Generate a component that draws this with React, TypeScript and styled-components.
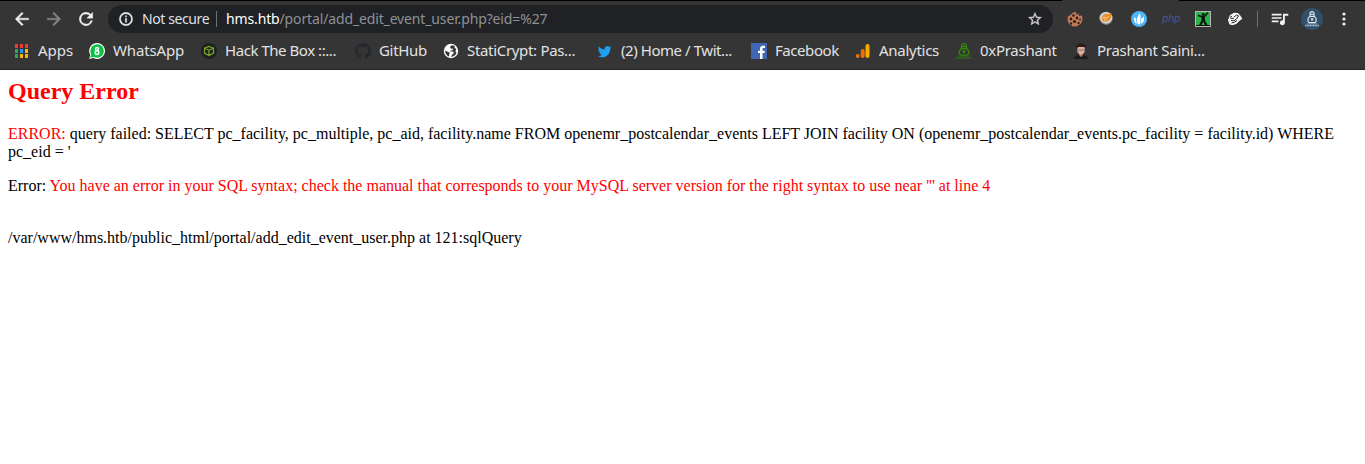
import React from 'react';
import styled, { createGlobalStyle } from 'styled-components';

const Global = createGlobalStyle`
  html, body { margin: 0; background: #fff; }
  * { box-sizing: border-box; }
`;

const ui = "'Noto Sans', sans-serif";

const Browser = styled.div`
  display: flex;
  flex-direction: column;
  height: 464px;
  overflow: hidden;
`;
const Chrome = styled.header`
  height: 70px;
  flex: none;
  background: #353535;
  border-bottom: 1px solid #242424;
  font-family: ${ui};
`;
const TabEdge = styled.div`
  height: 1px;
  display: flex;
  justify-content: space-between;
`;
const EdgeLine = styled.i<{ $w: number }>`
  width: ${p => p.$w}px;
  background: #000;
`;
const Toolbar = styled.div`
  height: 36px;
  display: flex;
  align-items: center;
  padding-left: 12px;
`;
const Slot = styled.span<{ $w: number }>`
  width: ${p => p.$w}px;
  flex: none;
  display: flex;
  align-items: center;
  justify-content: center;
  svg { display: block; flex: none; }
`;
const Address = styled.div`
  width: 945px;
  height: 28px;
  flex: none;
  border-radius: 14px;
  background: #202124;
  display: flex;
  align-items: center;
  padding: 0 8px 0 10px;
  font-size: 14px;
  line-height: 28px;
  white-space: pre;
`;
const Security = styled.span`
  width: 67px;
  margin-left: 8px;
  color: #dfe1e5;
  letter-spacing: -0.4px;
`;
const Split = styled.i<{ $m: number; $r: number }>`
  width: 1px;
  height: 16px;
  margin: 0 ${p => p.$r}px 0 ${p => p.$m}px;
  background: #6f7073;
`;
const Url = styled.span`
  flex: 1;
  color: #8e9296;
  letter-spacing: -0.14px;
  b { font-weight: 400; color: #fff; }
`;
const Php = styled.span`
  font: italic 10px 'DejaVu Sans', sans-serif;
  color: #4a559a;
  line-height: 16px;
  letter-spacing: -0.3px;
`;
const Bookmarks = styled.nav`
  height: 28px;
  display: flex;
  padding-left: 14px;
`;
const Bookmark = styled.a<{ $w: number }>`
  width: ${p => p.$w}px;
  flex: none;
  display: flex;
  align-items: center;
  gap: 8px;
  font-size: 15px;
  color: #e2e2e2;
  white-space: nowrap;
  svg { display: block; flex: none; }
`;
const Label = styled.span<{ $ls: number }>`
  line-height: 26px;
  padding-bottom: 2px;
  letter-spacing: ${p => p.$ls}px;
`;
const Page = styled.main`
  padding: 8px;
  font: 16px 'Liberation Serif', serif;
  line-height: 18px;
  color: #000;
`;
const Title = styled.h2`
  margin: 0 0 20px;
  font-size: 24px;
  line-height: 27px;
  color: #f00;
`;
const Para = styled.p<{ $gap?: number }>`
  margin: 0 0 ${p => p.$gap ?? 16}px;
`;
const Red = styled.span`
  color: #f00;
`;

const Icon = ({ s = 16, v = '0 0 16 16', children }: { s?: number; v?: string; children: React.ReactNode }) => (
  <svg width={s} height={s} viewBox={v} fill="none">{children}</svg>
);
const M = '0 0 24 24';

const Locker = ({ c }: { c: string }) => (
  <>
    <path d="M5.500 5V3a2.500 2.300 0 0 1 5 0V5M5.700 3.400h4.600" stroke={c} strokeWidth="1.200" />
    <path d="M5.300 5.500h5.400l2 2.500v3l-1.400 1.200H4.700L3.300 11V8z" stroke={c} strokeWidth="1.300" />
    <path d="M8 7.300v3.200M6.500 8.500h3" stroke={c} strokeWidth="1.300" />
    <path d="M2 13.400h12" stroke={c} strokeWidth=".8" opacity=".6" />
    <path d="M0 15h16" stroke={c} strokeWidth="1.600" strokeDasharray="1.400 .4" opacity=".7" />
  </>
);

const appDots = ['#f23b30', '#f23b30', '#f23b30', '#34a162', '#2196f3', '#f9b50b', '#34a162', '#f9b50b', '#f9b50b'];

const bookmarks: { w: number; ls: number; label: string; icon: React.ReactNode }[] = [
  { w: 75, ls: 0, label: 'Apps', icon: <Icon>{appDots.map((c, i) => <rect key={i} x={1 + (i % 3) * 5} y={1 + Math.floor(i / 3) * 5} width="3" height="4" fill={c} />)}</Icon> },
  { w: 112, ls: -0.14, label: 'WhatsApp', icon: <Icon><path d="M8 0a8 8 0 1 1-3.700 15.100L.2 16l1-4A8 8 0 0 1 8 0z" fill="#fff" /><circle cx="8.100" cy="8" r="6.800" fill="#0cc143" /><path d="M2 11l-.6 3.700L5.600 14z" fill="#0cc143" /><circle cx="8" cy="6.100" r="1.500" stroke="#fff" strokeWidth="1.500" /><circle cx="8" cy="9.600" r="1.800" stroke="#fff" strokeWidth="1.500" /></Icon> },
  { w: 154, ls: -0.45, label: 'Hack The Box ::...', icon: <Icon><circle cx="8" cy="8" r="8" fill="#1d2126" /><path d="M8 3.500l4.500 1.700v4.900L8 12.500l-4.500-2.400V5.200zM3.500 5.200L8 7.200l4.500-2M8 7.200v5.300" stroke="#7ba71b" strokeWidth="1.200" /></Icon> },
  { w: 88, ls: -0.33, label: 'GitHub', icon: <Icon><path fill="#24292e" d="M8 0a8 8 0 0 0-2.530 15.590c.4.070.55-.17.55-.38v-1.340c-2.230.49-2.700-1.070-2.700-1.070-.36-.93-.89-1.170-.89-1.170-.73-.5.050-.49.050-.49.8.060 1.230.83 1.230.83.72 1.220 1.870.87 2.330.66.070-.52.28-.87.5-1.070-1.770-.2-3.640-.89-3.640-3.950 0-.87.310-1.590.82-2.150-.08-.2-.36-1.020.08-2.120 0 0 .67-.21 2.200.82a7.600 7.600 0 0 1 4 0c1.530-1.040 2.200-.82 2.200-.82.44 1.100.16 1.920.08 2.120.51.56.82 1.270.82 2.150 0 3.070-1.870 3.750-3.650 3.950.29.25.54.73.54 1.480v2.200c0 .21.150.46.55.38A8 8 0 0 0 8 0z" /></Icon> },
  { w: 154, ls: -0.32, label: 'StatiCrypt: Pas...', icon: <Icon><circle cx="8" cy="8" r="7.200" fill="#fff" /><path fill="#353535" d="M9 2.300C7.600 3 7 3.500 7.300 4.700c.5.800 1.500.3 2.200.8.700.600.6 1.400-.2 1.700-1 .3-2.300.2-2.300 1.300h2.500c1.300 0 1.500 1.200 1 2-.5.600-1.300.6-1.500 1.300-.1.800-.5 1.500-1.300 2.200 3-.1 5.200-2 5.900-4.400-.8-.2-1.200-1-1-1.800.3-.9 1-1.200.4-2-.5-.5-1.400-.2-1.400-1 0-.7.4-1.100 0-1.700A6 6 0 0 0 9 2.300zM2.200 7.500c1.300.5 2.500 1.600 4 1.700.8.300.4 1.200.1 1.800-.2.600.2 1.600-.4 2.400A6 6 0 0 1 2.200 7.500z" /></Icon> },
  { w: 154, ls: -0.44, label: '(2) Home / Twit...', icon: <Icon s={16} v="0 0 24 24"><path fill="#1da1f2" d="M22.200 5.700c-.8.3-1.500.5-2.400.6.9-.5 1.500-1.300 1.800-2.200-.8.5-1.700.8-2.600 1A4.100 4.100 0 0 0 12 8.800C8.600 8.600 5.600 7 3.600 4.500a4.100 4.100 0 0 0 1.300 5.500c-.7 0-1.300-.2-1.900-.5 0 2 1.400 3.700 3.300 4.100-.6.2-1.200.2-1.900.1.500 1.600 2 2.800 3.800 2.800A8.200 8.200 0 0 1 2.200 18.200 11.600 11.600 0 0 0 20.100 7.800c.8-.6 1.500-1.300 2.100-2.100z" transform="translate(-1 .7) scale(1.030)" /></Icon> },
  { w: 104, ls: -0.44, label: 'Facebook', icon: <Icon><path fill="#4267b2" d="M0 0h16v16H0z" /><path fill="#fff" d="M9 16v-6H7V7.700h2V6c0-2 1.200-3.200 3-3.200h1.900v2.100h-1.200c-1 0-1.200.5-1.200 1.200v1.600h2.300L13.500 10h-2v6z" /></Icon> },
  { w: 101, ls: -0.27, label: 'Analytics', icon: <Icon><rect x="10.500" y="1" width="4" height="14" rx="2" fill="#f9ab00" /><rect x="5.700" y="6" width="4" height="9" rx="2" fill="#e8710a" /><circle cx="2.700" cy="13" r="2" fill="#e8710a" /></Icon> },
  { w: 117, ls: -0.28, label: '0xPrashant', icon: <Icon><Locker c="#308a0b" /></Icon> },
  { w: 150, ls: -0.28, label: 'Prashant Saini...', icon: <Icon><path fill="#191b1f" d="M1 16l.5-2 4-2.500h5l4 2.500.5 2z" /><path fill="#e2b09b" d="M4 4h8l-.4 5L9 12H7L4.400 9z" /><path fill="#291d1a" d="M3.800 6.500L3 3.500 4.800 1 9 .2l3 1 1 2.300-.8 3-.7-2.500H5z" /><path stroke="#77757d" d="M4.500 6.400h3v1.500H5zM8.700 6.400h3L11.300 7.900H8.700z" strokeWidth=".6" /><path d="M6.300 11l1.700.8 1.700-.8v1.800L8 14l-1.700-1.200z" fill="#b77b65" /></Icon> },
];

export default function App() {
  return (
    <Browser>
      <Global />
      <Chrome>
        <TabEdge><EdgeLine $w={1062} /><EdgeLine $w={186} /></TabEdge>
        <Toolbar>
          <Slot $w={20}><Icon s={20} v={M}><path fill="#f1f1f1" stroke="#f1f1f1" strokeWidth=".5" d="M20 11H7.830l5.590-5.590L12 4l-8 8 8 8 1.410-1.410L7.830 13H20z" /></Icon></Slot>
          <Slot $w={44}><Icon s={20} v={M}><path fill="#858585" stroke="#858585" strokeWidth=".5" d="M12 4l-1.410 1.410L16.170 11H4v2h12.170l-5.580 5.590L12 20l8-8z" /></Icon></Slot>
          <Slot $w={20}><Icon s={20} v={M}><path fill="#f1f1f1" stroke="#f1f1f1" strokeWidth=".5" d="M17.650 6.350A8 8 0 1 0 19.730 14h-2.080A6 6 0 1 1 12 6c1.660 0 3.140.69 4.220 1.780L13 11h7V4z" /></Icon></Slot>
          <Slot $w={12} />
          <Address>
            <Slot $w={16}><Icon s={16} v={M}><path fill="#e8eaed" d="M11 7h2v2h-2zm0 4h2v6h-2zm1-9a10 10 0 1 0 0 20 10 10 0 0 0 0-20zm0 18a8 8 0 1 1 0-16 8 8 0 0 1 0 16z" stroke="#e8eaed" strokeWidth=".6" /></Icon></Slot>
            <Security>Not secure</Security>
            <Split $m={7} $r={9} />
            <Url><b>hms.htb</b>/portal/add_edit_event_user.php?eid=%27</Url>
            <Slot $w={20}><Icon s={16} v={M}><path fill="#d0d1d3" d="M22 9.240l-7.190-.62L12 2 9.190 8.630 2 9.240l5.460 4.730L5.820 21 12 17.270 18.180 21l-1.630-7.030zM12 15.400l-3.760 2.270 1-4.280-3.320-2.880 4.380-.38L12 6.100l1.710 4.040 4.380.38-3.320 2.880 1 4.280z" stroke="#d0d1d3" strokeWidth=".5" /></Icon></Slot>
          </Address>
          <Slot $w={44}><Icon><path fill="#c47a54" d="M6 1.500L9 1l.5 3 2-1.500.5 2.500 3-.5.5 4-1.500 4-4 2.800-4 .2-4-2.500L.5 9 1 5.500 3.500 4z" /><g fill="#2b211f"><circle cx="6.500" cy="4.500" r="1.300" /><circle cx="10" cy="7" r="1.400" /><circle cx="4" cy="8" r="1.400" /><circle cx="7.500" cy="10.500" r="1.600" /><circle cx="13" cy="8.500" r="1" /><circle cx="11.500" cy="12" r="1.200" /><circle cx="4" cy="12.500" r="1.200" /></g></Icon></Slot>
          <Slot $w={18}><Icon><ellipse cx="8" cy="7" rx="6.500" ry="6.200" fill="#d2cdc6" /><path fill="#777" d="M2 8c2 6 10 7 13-1-1 9-12 9-13 1z" /><path fill="#ed891f" d="M4 7l1-3 3-1 2 .5 3-1.500.5 3-2 4-3.500 1.500L4.500 10z" /><path d="M5 7l2.500-1 1 1.500L11 5M6 9l2-1" stroke="#ffe2a0" strokeWidth=".9" /></Icon></Slot>
          <Slot $w={48}><Icon><circle cx="8" cy="8" r="8" fill="#4eb5f7" /><path fill="#fff" d="M8.200 2.500L9.500 4v8L8 14l-1.800-2L6 7.500zM3.300 6l1.700 1.500.7 5.300L4 11.500 3 8.500zM12.800 5.500l.2 4-1.200 2.200-1.800 1V8z" /></Icon></Slot>
          <Slot $w={16}><Php>php</Php></Slot>
          <Slot $w={48}><Icon><rect x=".5" y=".5" width="15" height="15" fill="#29b34a" stroke="#b7b7b7" /><path d="M9.500 5.500L13 1.500M8.500 6L3 4.500" stroke="#07130b" strokeWidth="1.500" /><path fill="#07130b" d="M6.500 5h3.300l.2 4.500 2.500 4.500H15v1H1v-1h3l2.500-4.500z" /><path fill="#29b34a" d="M8.300 10.500L10 14H6.500z" /><circle cx="8.200" cy="3.500" r="1.400" fill="#07130b" /></Icon></Slot>
          <Slot $w={16}><Icon><path fill="#f5f5f5" d="M3 4l4-2.200 4 .2 2.300 2.500 2 3.300-3 2.200-3 3-4 1.200-3-1L1 9z" /><path d="M3 6.500L5 5.200M4 9.500l3 .2L9.500 8l2-3.200L9.500 4 7 6M3.500 7.500L7 7.300M4.500 12l3-.8L10 9.500" stroke="#2d2d2d" strokeWidth="1" /></Icon></Slot>
          <Split $m={14} $r={11} />
          <Slot $w={22}><Icon s={18} v={M}><path fill="#f1f1f1" d="M1 5h13v2.200H1zm0 4.500h13v2.200H1zM1 14h9v2.200H1zM16 5h7v2.500h-4.500V17a3.300 3.300 0 1 1-2.500-3.200z" /></Icon></Slot>
          <Slot $w={42}><Icon s={22} v="0 0 22 22"><circle cx="11" cy="11" r="11" fill="#30506b" /><g transform="translate(4.200 3) scale(.86 .96)"><Locker c="#e1e8ed" /></g></Icon></Slot>
          <Slot $w={22}><Icon><g fill="#f1f1f1"><circle cx="8" cy="3" r="1.600" /><circle cx="8" cy="8" r="1.600" /><circle cx="8" cy="13" r="1.600" /></g></Icon></Slot>
        </Toolbar>
        <Bookmarks>
          {bookmarks.map(b => <Bookmark key={b.label} $w={b.w}>{b.icon}<Label $ls={b.ls}>{b.label}</Label></Bookmark>)}
        </Bookmarks>
      </Chrome>
      <Page>
        <Title>Query Error</Title>
        <Para><Red>ERROR:</Red> query failed: SELECT pc_facility, pc_multiple, pc_aid, facility.name FROM openemr_postcalendar_events LEFT JOIN facility ON (openemr_postcalendar_events.pc_facility = facility.id) WHERE pc_eid = '</Para>
        <Para $gap={34}>Error: <Red>You have an error in your SQL syntax; check the manual that corresponds to your MySQL server version for the right syntax to use near ''' at line 4</Red></Para>
        <Para>/var/www/hms.htb/public_html/portal/add_edit_event_user.php at 121:sqlQuery</Para>
      </Page>
    </Browser>
  );
}
